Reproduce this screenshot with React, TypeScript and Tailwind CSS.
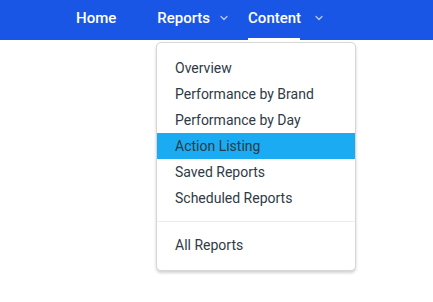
import { ChevronDown } from 'lucide-react'

const items = ['Overview', 'Performance by Brand', 'Performance by Day', 'Action Listing', 'Saved Reports', 'Scheduled Reports']

export default function App() {
  return (
    <div className="w-[433px] h-[302px] bg-white relative" style={{ fontFamily: 'Roboto, "Liberation Sans", sans-serif' }}>
      <nav className="h-[40px] bg-[#1a56e6] flex items-center pl-[76px] pb-[4px] text-white text-[15px] font-medium">
        <span>Home</span>
        <span className="ml-[41px] flex items-center">
          Reports
          <ChevronDown className="ml-[8px] w-[12px] h-[12px] text-[#b9c9f5]" strokeWidth={2.5} />
        </span>
        <span className="ml-[18px] flex items-center relative">
          Content
          <ChevronDown className="ml-[12px] w-[12px] h-[12px] text-[#b9c9f5]" strokeWidth={2.5} />
          <span className="absolute left-0 top-[31px] w-[52px] h-[2px] bg-white" />
        </span>
      </nav>

      <div className="absolute left-[156px] top-[42px] w-[200px] bg-white border border-[#d6d6d6] rounded-[5px] shadow-[0_2px_3px_rgba(0,0,0,0.18)] pt-[12px] pb-[12px] text-[14px] text-[#2f3a45]">
        {items.map(item => (
          <div key={item} className={`h-[26px] flex items-center pl-[18px] ${item === 'Action Listing' ? 'bg-[#1aabf2]' : ''}`}>
            {item}
          </div>
        ))}
        <div className="my-[10px] h-px bg-[#ececec]" />
        <div className="h-[26px] flex items-center pl-[18px]">All Reports</div>
      </div>
    </div>
  )
}
